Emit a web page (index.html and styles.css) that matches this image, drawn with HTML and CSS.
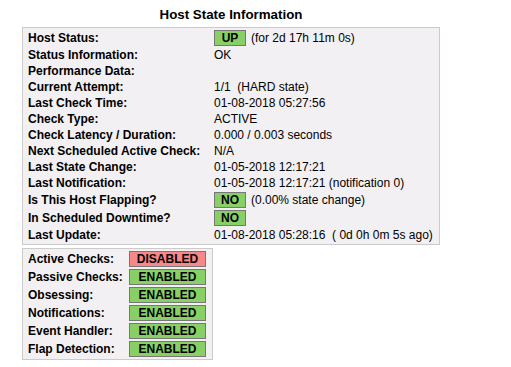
FILE: index.html
```html
<!DOCTYPE html>
<html>
<head>
    <meta charset="UTF-8">
    <title>Host State Information</title>
    <link rel="stylesheet" href="styles.css">
</head>
<body>
    <div class="stateBox">
        <div class="dataTitle">Host State Information</div>

        <div class="stateInfoTable main">
            <div class="dataVar tall">Host Status:</div>
            <div class="dataVal tall"><span class="badge ok short">UP</span> (for 2d 17h 11m 0s)</div>

            <div class="dataVar">Status Information:</div>
            <div class="dataVal">OK</div>

            <div class="dataVar">Performance Data:</div>
            <div class="dataVal"></div>

            <div class="dataVar">Current Attempt:</div>
            <div class="dataVal">1/1&nbsp;&nbsp;(HARD state)</div>

            <div class="dataVar">Last Check Time:</div>
            <div class="dataVal">01-08-2018 05:27:56</div>

            <div class="dataVar">Check Type:</div>
            <div class="dataVal">ACTIVE</div>

            <div class="dataVar">Check Latency / Duration:</div>
            <div class="dataVal">0.000&nbsp;/&nbsp;0.003 seconds</div>

            <div class="dataVar">Next Scheduled Active Check:&nbsp;&nbsp;</div>
            <div class="dataVal">N/A</div>

            <div class="dataVar">Last State Change:</div>
            <div class="dataVal">01-05-2018 12:17:21</div>

            <div class="dataVar">Last Notification:</div>
            <div class="dataVal">01-05-2018 12:17:21&nbsp;(notification 0)</div>

            <div class="dataVar tall">Is This Host Flapping?</div>
            <div class="dataVal tall"><span class="badge ok short">NO</span> (0.00% state change)</div>

            <div class="dataVar tall">In Scheduled Downtime?</div>
            <div class="dataVal tall"><span class="badge ok short">NO</span></div>

            <div class="dataVar">Last Update:</div>
            <div class="dataVal">01-08-2018 05:28:16&nbsp;&nbsp;( 0d 0h 0m 5s ago)</div>
        </div>

        <div class="stateInfoTable checks">
            <div class="dataVar tall">Active Checks:</div>
            <div class="dataVal tall"><span class="badge bad wide">DISABLED</span></div>

            <div class="dataVar tall">Passive Checks:</div>
            <div class="dataVal tall"><span class="badge ok wide">ENABLED</span></div>

            <div class="dataVar tall">Obsessing:</div>
            <div class="dataVal tall"><span class="badge ok wide">ENABLED</span></div>

            <div class="dataVar tall">Notifications:</div>
            <div class="dataVal tall"><span class="badge ok wide">ENABLED</span></div>

            <div class="dataVar tall">Event Handler:</div>
            <div class="dataVal tall"><span class="badge ok wide">ENABLED</span></div>

            <div class="dataVar tall">Flap Detection:</div>
            <div class="dataVal tall"><span class="badge ok wide">ENABLED</span></div>
        </div>
    </div>
</body>
</html>
```

FILE: styles.css
```css
body {
    margin: 0;
    background: #ffffff;
    font-family: "Liberation Sans", Arial, sans-serif;
    font-size: 12px;
    color: #000000;
}
.stateBox {
    width: 418px;
    padding: 7px 0 0 22px;
}
.dataTitle {
    text-align: center;
    font-weight: bold;
    font-size: 13.33px;
    line-height: 15px;
    height: 20px;
}
.stateInfoTable {
    display: grid;
    box-sizing: border-box;
    background-color: #f2f0f2;
    border: 1px solid #cbcbcb;
    padding: 1px 5px;
}
.main {
    width: 418px;
    grid-template-columns: 186px 1fr;
}
.checks {
    width: 191px;
    margin-top: 3px;
    grid-template-columns: 101px 1fr;
}
.dataVar {
    font-weight: bold;
    line-height: 14px;
    padding: 1px 0;
    white-space: nowrap;
}
.dataVal {
    line-height: 14px;
    padding: 1px 0;
    white-space: nowrap;
}
.tall {
    height: 18px;
    padding: 0;
    display: flex;
    align-items: center;
}
.badge {
    display: inline-block;
    box-sizing: border-box;
    height: 16px;
    line-height: 14px;
    border: 1px solid #777777;
    font-weight: bold;
    text-align: center;
    margin-right: 5px;
}
.ok {
    background-color: #88d066;
}
.bad {
    background-color: #f88888;
}
.short {
    width: 32px;
}
.wide {
    width: 77px;
    margin-right: 0;
}
```
